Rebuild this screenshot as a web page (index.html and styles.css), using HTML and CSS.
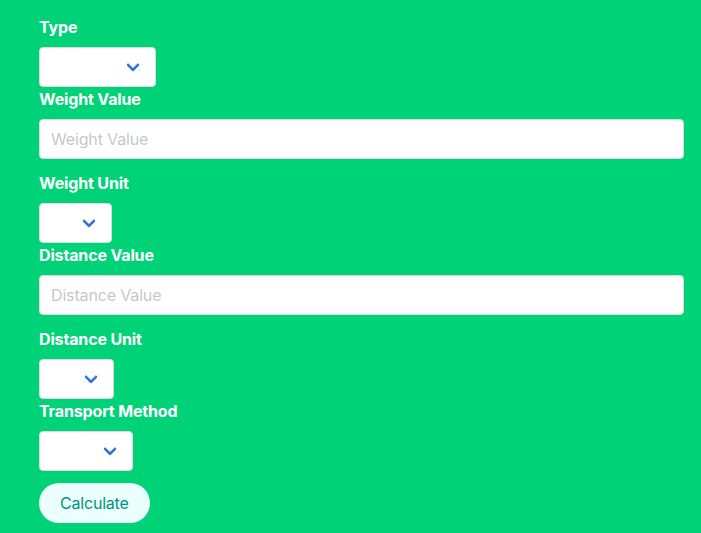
FILE: index.html
```html
<!DOCTYPE html>
<html>
<head>
<meta charset="utf-8">
<link rel="stylesheet" href="styles.css">
</head>
<body>
<form class="form">
  <div class="field field-select">
    <label class="label">Type</label>
    <div class="select"><select class="w-type"><option></option></select></div>
  </div>
  <div class="field">
    <label class="label">Weight Value</label>
    <input class="input" type="text" placeholder="Weight Value">
  </div>
  <div class="field field-select">
    <label class="label">Weight Unit</label>
    <div class="select"><select class="w-wunit"><option></option></select></div>
  </div>
  <div class="field">
    <label class="label">Distance Value</label>
    <input class="input" type="text" placeholder="Distance Value">
  </div>
  <div class="field field-select">
    <label class="label">Distance Unit</label>
    <div class="select"><select class="w-dunit"><option></option></select></div>
  </div>
  <div class="field">
    <label class="label">Transport Method</label>
    <div class="select"><select class="w-method"><option></option></select></div>
  </div>
  <div class="field">
    <button type="button" class="button">Calculate</button>
  </div>
</form>
</body>
</html>
```

FILE: styles.css
```css
html, body {
  margin: 0;
  padding: 0;
}
body {
  background: #00d377;
  font-family: Inter, "Noto Sans", "Liberation Sans", sans-serif;
  font-size: 16px;
  line-height: 1.5;
  letter-spacing: -0.15px;
  width: 701px;
  height: 533px;
  overflow: hidden;
}
.form {
  padding: 15px 17px 0 39px;
}
.field {
  margin-bottom: 12px;
}
.field-select {
  margin-bottom: 0;
}
.label {
  display: block;
  color: #fff;
  font-weight: 700;
  font-size: 16px;
  line-height: 24px;
  margin-bottom: 8px;
}
.input {
  box-sizing: border-box;
  display: block;
  width: 100%;
  height: 40px;
  border: 1px solid #dbdbdb;
  border-radius: 4px;
  background: #fff;
  box-shadow: inset 0 1px 2px rgba(10,10,10,0.05);
  padding: 0 11px;
  font-family: inherit;
  font-size: 16px;
  letter-spacing: -0.15px;
  color: #363636;
  outline: none;
}
.input::placeholder {
  color: rgba(54,54,54,0.3);
}
.select {
  position: relative;
  display: inline-block;
  vertical-align: top;
  height: 40px;
}
.select::after {
  content: "";
  position: absolute;
  right: 18px;
  top: 50%;
  width: 10px;
  height: 10px;
  margin-top: -7px;
  border: 3px solid #3273dc;
  border-top: 0;
  border-right: 0;
  border-radius: 2px;
  box-sizing: border-box;
  transform: rotate(-45deg);
  transform-origin: center;
  pointer-events: none;
}
.select select {
  -webkit-appearance: none;
  appearance: none;
  box-sizing: border-box;
  height: 40px;
  border: 1px solid #dbdbdb;
  border-radius: 4px;
  background: #fff;
  padding: 0 36px 0 11px;
  font-family: inherit;
  font-size: 16px;
  color: #363636;
  outline: none;
}
.w-type { width: 117px; }
.w-wunit { width: 73px; }
.w-dunit { width: 75px; }
.w-method { width: 94px; }
.button {
  box-sizing: border-box;
  height: 40px;
  padding: 0 20px;
  border: 1px solid transparent;
  border-radius: 9999px;
  background: #ebfffc;
  color: #00947e;
  font-family: inherit;
  font-size: 16px;
  letter-spacing: -0.2px;
  cursor: pointer;
}
```
